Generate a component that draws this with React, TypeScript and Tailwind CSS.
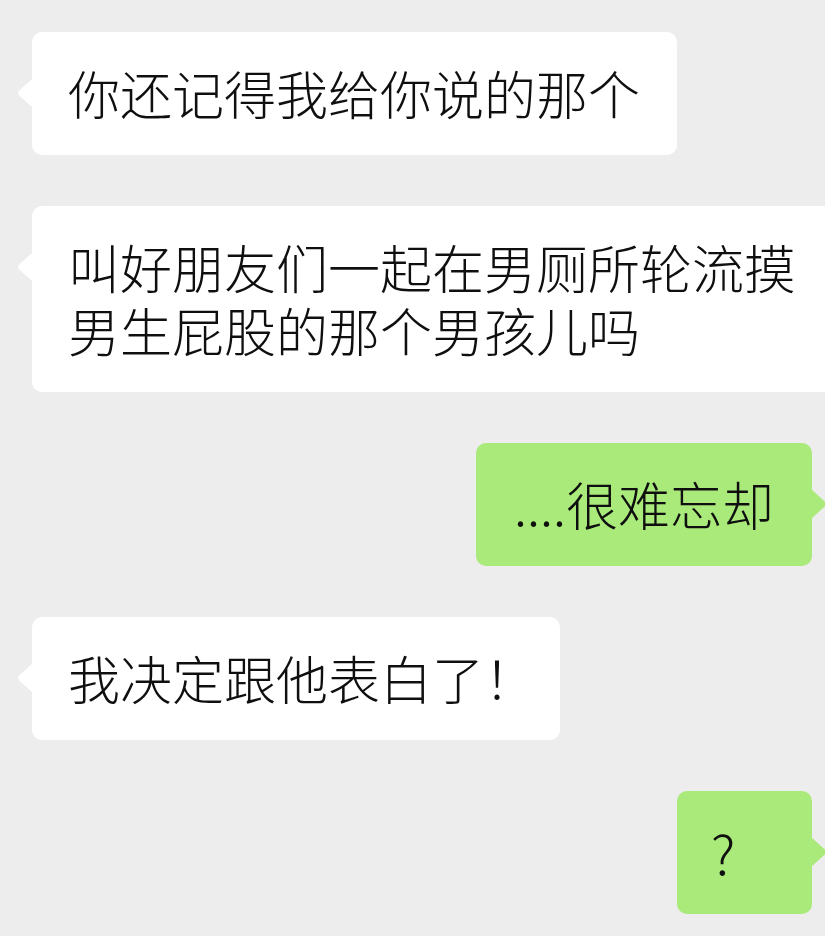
import React from "react";

const font = { fontFamily: '"Noto Sans CJK SC", "Noto Sans", sans-serif' };

function LeftTail() {
  return (
    <svg
      className="absolute left-[-15px] top-[46px]"
      width="16"
      height="30"
      viewBox="0 0 16 30"
    >
      <path d="M16 0 L2.2 12.6 Q0 15 2.2 17.4 L16 30 Z" fill="#ffffff" />
    </svg>
  );
}

function RightTail() {
  return (
    <svg
      className="absolute right-[-15px] top-[46px]"
      width="16"
      height="30"
      viewBox="0 0 16 30"
    >
      <path d="M0 0 L13.8 12.6 Q16 15 13.8 17.4 L0 30 Z" fill="#a9ea7a" />
    </svg>
  );
}

export default function App() {
  return (
    <div
      className="w-[825px] h-[936px] overflow-hidden bg-[#ededed] text-[#0f0f0f] font-light"
      style={font}
    >
      <div className="flex flex-col gap-[51px] pt-[32px]">
        <div className="pl-[32px]">
          <div className="relative w-[645px] rounded-[10px] bg-white pl-[36px] pt-[29px] pb-[31px] text-[52px] leading-[63px] whitespace-nowrap">
            <LeftTail />
            你还记得我给你说的那个
          </div>
        </div>

        <div className="pl-[32px]">
          <div className="relative w-[830px] rounded-[10px] bg-white pl-[36px] pt-[29px] pb-[31px] text-[52px] leading-[63px] whitespace-nowrap">
            <LeftTail />
            叫好朋友们一起在男厕所轮流摸
            <br />
            男生屁股的那个男孩儿吗
          </div>
        </div>

        <div className="flex justify-end pr-[13px]">
          <div className="relative w-[336px] rounded-[10px] bg-[#a9ea7a] pl-[38px] pt-[29px] pb-[31px] text-[52px] leading-[63px] whitespace-nowrap">
            <RightTail />
            ....很难忘却
          </div>
        </div>

        <div className="pl-[32px]">
          <div className="relative w-[528px] rounded-[10px] bg-white pl-[36px] pt-[29px] pb-[31px] text-[52px] leading-[63px] whitespace-nowrap">
            <LeftTail />
            我决定跟他表白了！
          </div>
        </div>

        <div className="flex justify-end pr-[13px]">
          <div className="relative w-[135px] rounded-[10px] bg-[#a9ea7a] pl-[34px] pt-[29px] pb-[31px] text-[54px] leading-[63px] whitespace-nowrap">
            <RightTail />
            ?
          </div>
        </div>
      </div>
    </div>
  );
}
